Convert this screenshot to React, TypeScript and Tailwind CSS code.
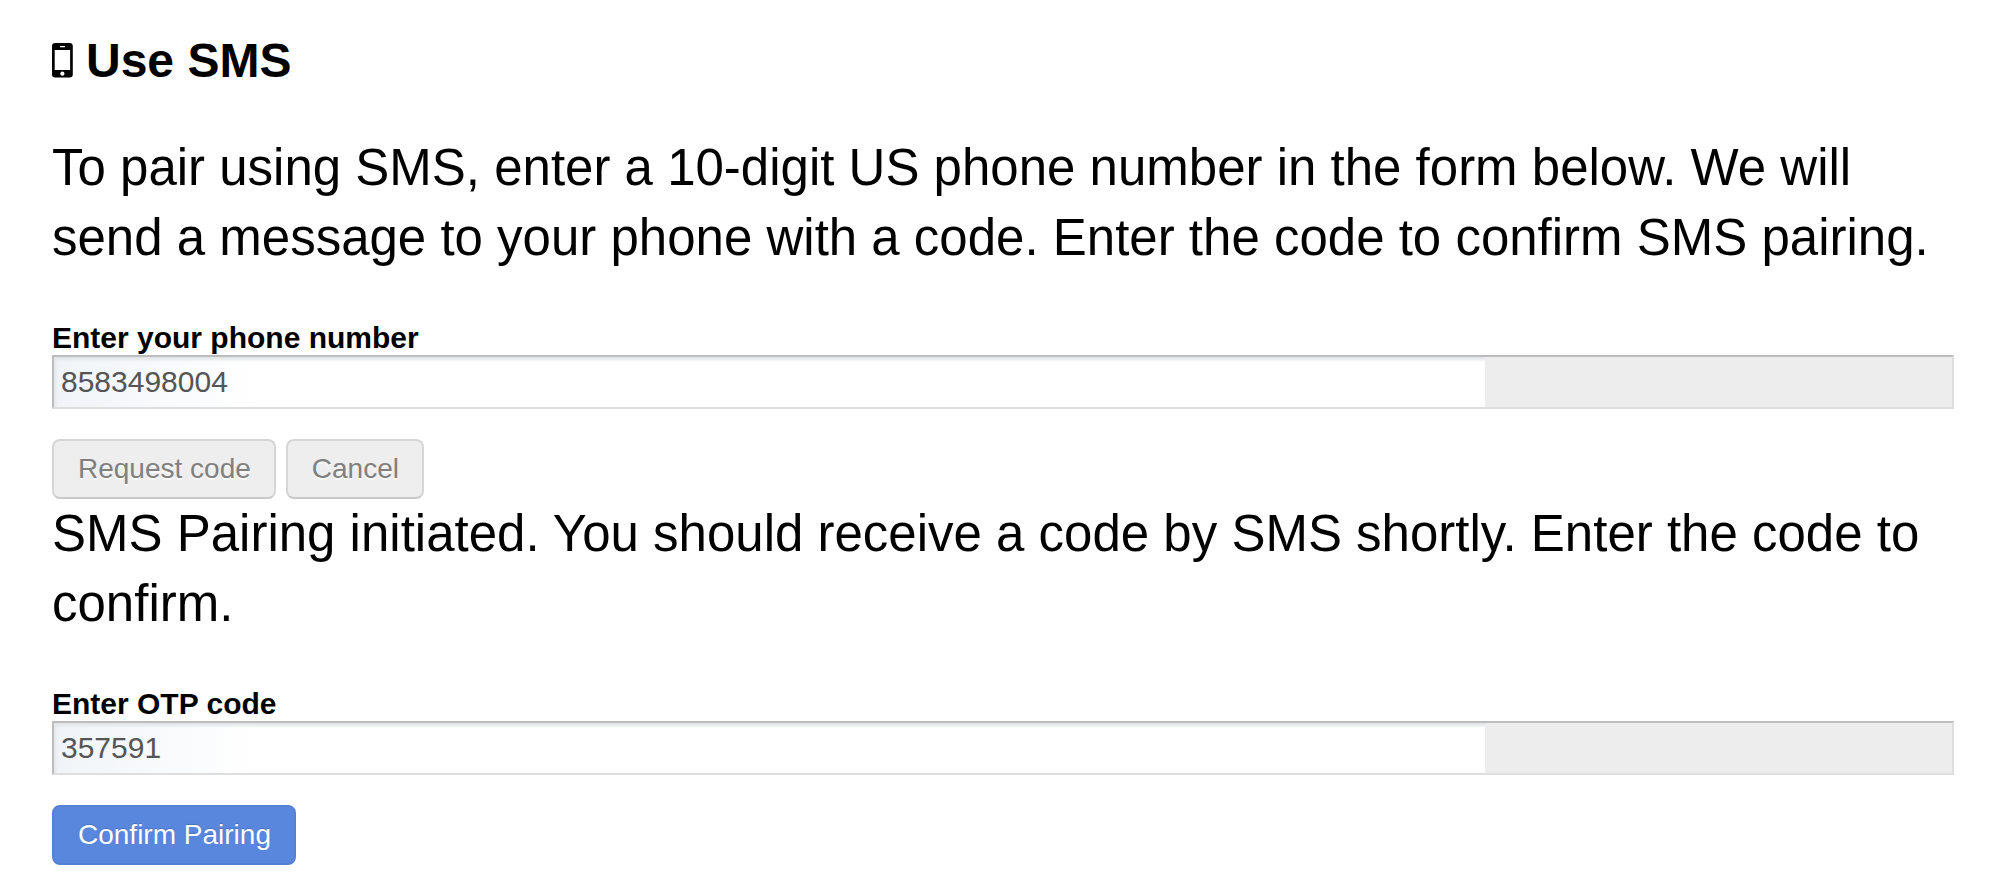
import React from "react";

type FieldProps = { id: string; label: string; value: string };

function Field({ id, label, value }: FieldProps) {
  return (
    <div className="flex flex-col">
      <label htmlFor={id} className="text-[30px] leading-[34px] font-bold">{label}</label>
      <div className="grid h-[54px] grid-cols-[1431fr_467fr] border-2 border-[#dedede] border-t-[#bdbdbd] border-l-[#bdbdbd] bg-[#ededed]">
        <input
          id={id}
          defaultValue={value}
          className="h-full w-full min-w-0 bg-white bg-linear-to-r from-[#f0f4f8] via-white via-14% to-white pl-[7px] text-[30px] text-[#555555] shadow-[inset_2px_3px_3px_#e2e5e8] outline-none"
        />
      </div>
    </div>
  );
}

const disabledButton =
  "h-15 rounded-lg border-2 border-[#d6d6d6] border-b-[#c8c8c8] bg-[#eeeeee] pr-[23px] pl-6 text-[28px] text-[#808080] text-shadow-[0_2px_0_#f8f8f8]";

export default function App() {
  return (
    <main className="flex flex-col bg-white pt-[37px] pr-[46px] pb-[10px] pl-[52px] font-['Liberation_Sans',Arial,sans-serif] text-black">
      <h1 className="flex items-center gap-[13px] text-[48px] leading-[48px] font-bold">
        <svg viewBox="0 0 21 36" className="h-9 w-[21px]" aria-hidden="true">
          <rect width="20.8" height="34.4" rx="3.2" fill="#000" />
          <rect x="2.7" y="7" width="15.4" height="20" fill="#fff" />
          <circle cx="10.4" cy="30.7" r="2.1" fill="#fff" />
          <rect x="8" y="3.1" width="5" height="1.1" rx="0.5" fill="#fff" />
        </svg>
        Use SMS
      </h1>
      <p className="mt-12 mb-12 text-[51px] leading-[70px]">
        To pair using SMS, enter a 10-digit US phone number in the form below. We will send a message to your phone with a code. Enter the code to confirm SMS pairing.
      </p>
      <Field id="phone" label="Enter your phone number" value="8583498004" />
      <div className="mt-[30px] flex gap-[10px]">
        <button disabled className={disabledButton}>Request code</button>
        <button disabled className={disabledButton}>Cancel</button>
      </div>
      <p className="mb-12 text-[51px] leading-[70px]">
        SMS Pairing initiated. You should receive a code by SMS shortly. Enter the code to confirm.
      </p>
      <Field id="otp" label="Enter OTP code" value="357591" />
      <div className="mt-[30px] flex">
        <button className="h-15 rounded-lg border-2 border-[#5680d4] bg-[#5a87de] pr-[23px] pl-6 text-[28px] text-white text-shadow-[0_-1px_1px_#4a70bb]">Confirm Pairing</button>
      </div>
    </main>
  );
}
